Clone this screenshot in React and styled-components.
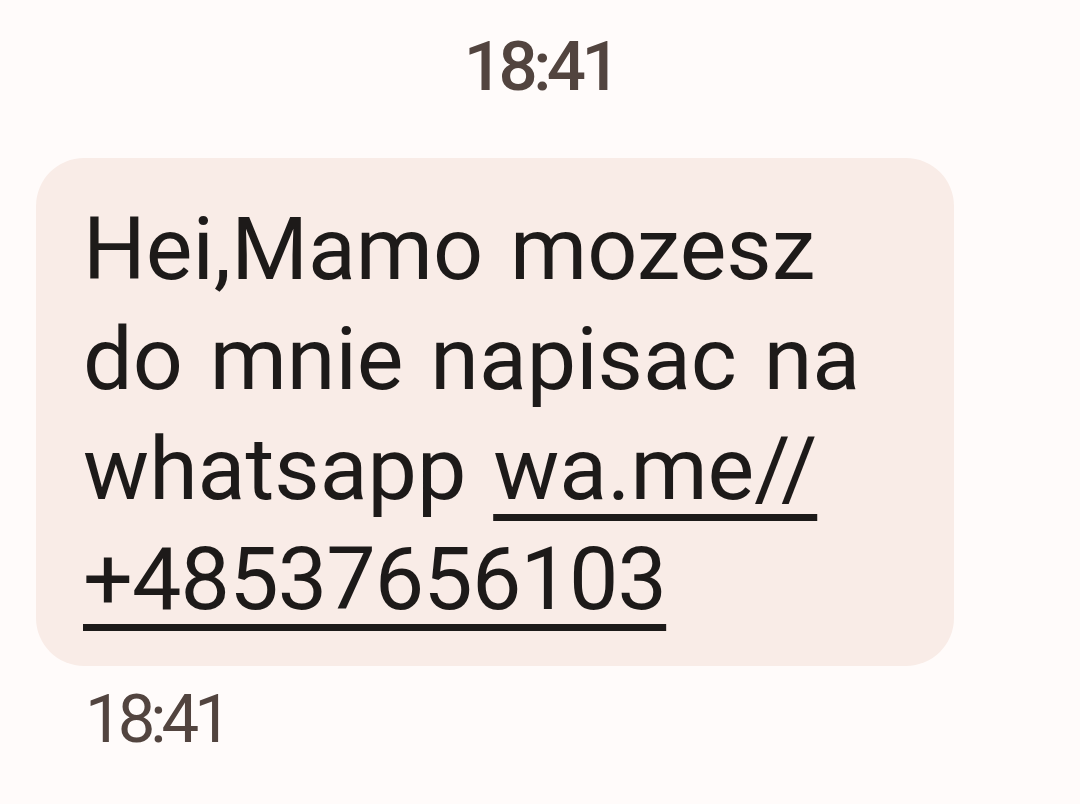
import React from "react";
import styled, { createGlobalStyle } from "styled-components";

const Global = createGlobalStyle`
  html, body { margin: 0; padding: 0; background: #fffbfa; }
  body { width: 1080px; height: 804px; overflow: hidden; font-family: Roboto, "Noto Sans", sans-serif; }
`;

const Page = styled.div`
  display: flex;
  flex-direction: column;
  align-items: stretch;
  padding: 27px 0 0;
`;

const Stamp = styled.div`
  font-family: Roboto, "Noto Sans", sans-serif;
  font-size: ${(p) => (p.$center ? "69px" : "67px")};
  font-weight: ${(p) => (p.$center ? 500 : 400)};
  line-height: 80px;
  color: #52443f;
  text-align: ${(p) => (p.$center ? "center" : "left")};
  padding-left: ${(p) => (p.$center ? "0" : "85px")};
  margin-top: ${(p) => (p.$center ? "0" : "13px")};
  letter-spacing: ${(p) => (p.$center ? "-4.5px" : "-5px")};
`;

const Bubble = styled.div`
  margin: 51px 0 0 36px;
  width: 918px;
  box-sizing: border-box;
  background: #f9ece7;
  border-radius: 48px;
  padding: 36px 40px 32px 47px;
  color: #1d1a19;
  font-size: 88px;
  line-height: 110px;
  letter-spacing: 0;
  word-spacing: 5px;
`;

const Link = styled.a`
  color: inherit;
  text-decoration: underline;
  text-decoration-thickness: 7px;
  text-underline-offset: 15px;
`;

const Number = styled.span`
  letter-spacing: -0.9px;
`;

export default function App() {
  return (
    <>
      <Global />
      <Page>
        <Stamp $center>18:41</Stamp>
        <Bubble>
          Hei,Mamo mozesz
          <br />
          do mnie napisac na
          <br />
          whatsapp{" "}
          <Link href="#">
            wa.me//
            <br />
            <Number>+48537656103</Number>
          </Link>
        </Bubble>
        <Stamp>18:41</Stamp>
      </Page>
    </>
  );
}
